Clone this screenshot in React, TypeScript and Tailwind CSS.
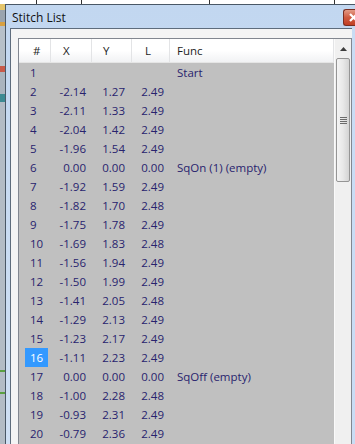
import React from 'react';

type Row = { n: number; x: string; y: string; l: string; f: string };

const rows: Row[] = [
  { n: 1, x: '', y: '', l: '', f: 'Start' },
  { n: 2, x: '-2.14', y: '1.27', l: '2.49', f: '' },
  { n: 3, x: '-2.11', y: '1.33', l: '2.49', f: '' },
  { n: 4, x: '-2.04', y: '1.42', l: '2.49', f: '' },
  { n: 5, x: '-1.96', y: '1.54', l: '2.49', f: '' },
  { n: 6, x: '0.00', y: '0.00', l: '0.00', f: 'SqOn (1) (empty)' },
  { n: 7, x: '-1.92', y: '1.59', l: '2.49', f: '' },
  { n: 8, x: '-1.82', y: '1.70', l: '2.48', f: '' },
  { n: 9, x: '-1.75', y: '1.78', l: '2.49', f: '' },
  { n: 10, x: '-1.69', y: '1.83', l: '2.48', f: '' },
  { n: 11, x: '-1.56', y: '1.94', l: '2.49', f: '' },
  { n: 12, x: '-1.50', y: '1.99', l: '2.49', f: '' },
  { n: 13, x: '-1.41', y: '2.05', l: '2.48', f: '' },
  { n: 14, x: '-1.29', y: '2.13', l: '2.49', f: '' },
  { n: 15, x: '-1.23', y: '2.17', l: '2.49', f: '' },
  { n: 16, x: '-1.11', y: '2.23', l: '2.49', f: '' },
  { n: 17, x: '0.00', y: '0.00', l: '0.00', f: 'SqOff (empty)' },
  { n: 18, x: '-1.00', y: '2.28', l: '2.48', f: '' },
  { n: 19, x: '-0.93', y: '2.31', l: '2.49', f: '' },
  { n: 20, x: '-0.79', y: '2.36', l: '2.49', f: '' },
];

const SELECTED = 16;

function App() {
  return (
    <div className="w-[355px] h-[444px] overflow-hidden flex flex-col bg-white font-['Open_Sans',sans-serif] text-[11.5px]">
      {/* app behind the window */}
      <div className="h-[4px] flex bg-white">
        <div className="w-[37px] border-r border-[#333]" />
        <div className="w-[45px] border-r border-[#333]" />
        <div className="w-[128px] border-r border-[#333]" />
        <div className="w-[125px] border-r border-[#333]" />
        <div className="flex-1" />
      </div>

      <div className="flex flex-1 min-h-0">
        <div className="w-[5px] flex flex-col bg-[#a7b1bb]">
          <div className="h-[6px] bg-[#e4c46a]" />
          <div className="h-[12px] bg-[#9aa4ae]" />
          <div className="h-[4px] bg-[#d8a040]" />
          <div className="h-[40px] bg-[#b7c0c8]" />
          <div className="h-[6px] bg-[#c85a4a]" />
          <div className="h-[22px] bg-[#aab4be]" />
          <div className="h-[8px] bg-[#3d8a92]" />
          <div className="flex-1 bg-[#b3bcc5]" />
          <div className="h-[2px] bg-[#5aa040]" />
          <div className="h-[20px] bg-[#b3bcc5]" />
          <div className="h-[2px] bg-[#5aa040]" />
          <div className="h-[50px] bg-[#b3bcc5]" />
        </div>

        {/* window */}
        <div className="flex-1 flex flex-col border-l border-t border-[#4a5866] bg-gradient-to-b from-[#c2d7f0] to-[#cfe0f4]">
          <div className="h-[23px] flex items-start justify-between">
            <span className="pl-[6px] pt-[4px] text-[12px] text-[#111]">Stitch List</span>
            <div className="mt-[4px] h-[17px] w-[12px] rounded-l-[3px] border border-r-0 border-[#7a2e22] bg-gradient-to-b from-[#e29a86] via-[#cf5a40] to-[#c23e22] flex items-center overflow-hidden">
              <svg width="10" height="10" viewBox="0 0 10 10" className="ml-[5px] shrink-0">
                <path d="M1 1 L8 8 M8 1 L1 8" stroke="#fff" strokeWidth="2.2" />
              </svg>
            </div>
          </div>

          <div className="flex-1 flex pl-[4px] min-h-0">
            <div className="flex-1 flex border-l border-t border-[#5e6c7c] bg-[#f4f4f4] pl-[7px] pt-[9px] min-h-0">
              <div className="flex-1 flex border-l border-t border-r border-[#828790] bg-[#c0c0c0] min-h-0">
                <div className="flex-1 flex flex-col min-w-0">
                  {/* header */}
                  <div className="h-[24px] grid grid-cols-[32px_41px_40px_38px_1fr] border-b border-[#e5e5e5] bg-gradient-to-b from-white from-50% to-[#f1f2f4] text-[#1e1e1e]">
                    <div className="flex items-center pl-[14px] border-r border-[#e3e4e6]">#</div>
                    <div className="flex items-center pl-[12px] border-r border-[#e3e4e6]">X</div>
                    <div className="flex items-center pl-[11px] border-r border-[#e3e4e6]">Y</div>
                    <div className="flex items-center pl-[13px] border-r border-[#e3e4e6]">L</div>
                    <div className="flex items-center pl-[7px] border-r border-[#e3e4e6]">Func</div>
                  </div>
                  {/* rows */}
                  {rows.map((r) => (
                    <div key={r.n} className="h-[19px] shrink-0 grid grid-cols-[32px_41px_40px_38px_1fr] text-[#28236e]">
                      <div className="flex items-center pl-[6px]">
                        {r.n === SELECTED ? (
                          <span className="h-[19px] w-[23px] flex items-center pl-[5px] bg-[#3399ff] text-white">{r.n}</span>
                        ) : (
                          <span className="pl-[5px]">{r.n}</span>
                        )}
                      </div>
                      <div className="flex items-center justify-end pr-[6px]">{r.x}</div>
                      <div className="flex items-center justify-end pr-[7px]">{r.y}</div>
                      <div className="flex items-center justify-end pr-[6px]">{r.l}</div>
                      <div className="flex items-center pl-[7px] whitespace-nowrap">{r.f}</div>
                    </div>
                  ))}
                </div>

                {/* scrollbar */}
                <div className="w-[17px] flex flex-col bg-[#f0f0f0] border-l border-[#fafafa]">
                  <div className="h-[19px] flex items-center justify-center">
                    <svg width="7" height="4" viewBox="0 0 7 4">
                      <path d="M0 4 L3.5 0 L7 4 Z" fill="#3c3c3c" />
                    </svg>
                  </div>
                  <div className="mx-[1px] h-[124px] rounded-[2px] border border-[#959595] bg-gradient-to-r from-[#f4f4f4] via-[#e8e8e8] to-[#d4d4d4] flex flex-col items-center justify-center gap-[1px]">
                    <div className="w-[7px] h-[1px] bg-[#6b6b6b]" />
                    <div className="w-[7px] h-[1px] bg-[#6b6b6b]" />
                    <div className="w-[7px] h-[1px] bg-[#6b6b6b]" />
                    <div className="w-[7px] h-[1px] bg-[#6b6b6b]" />
                  </div>
                  <div className="flex-1" />
                </div>
              </div>
            </div>
            <div className="w-[3px] bg-[#c9dcf4]" />
          </div>
        </div>
      </div>
    </div>
  );
}

export default App;
